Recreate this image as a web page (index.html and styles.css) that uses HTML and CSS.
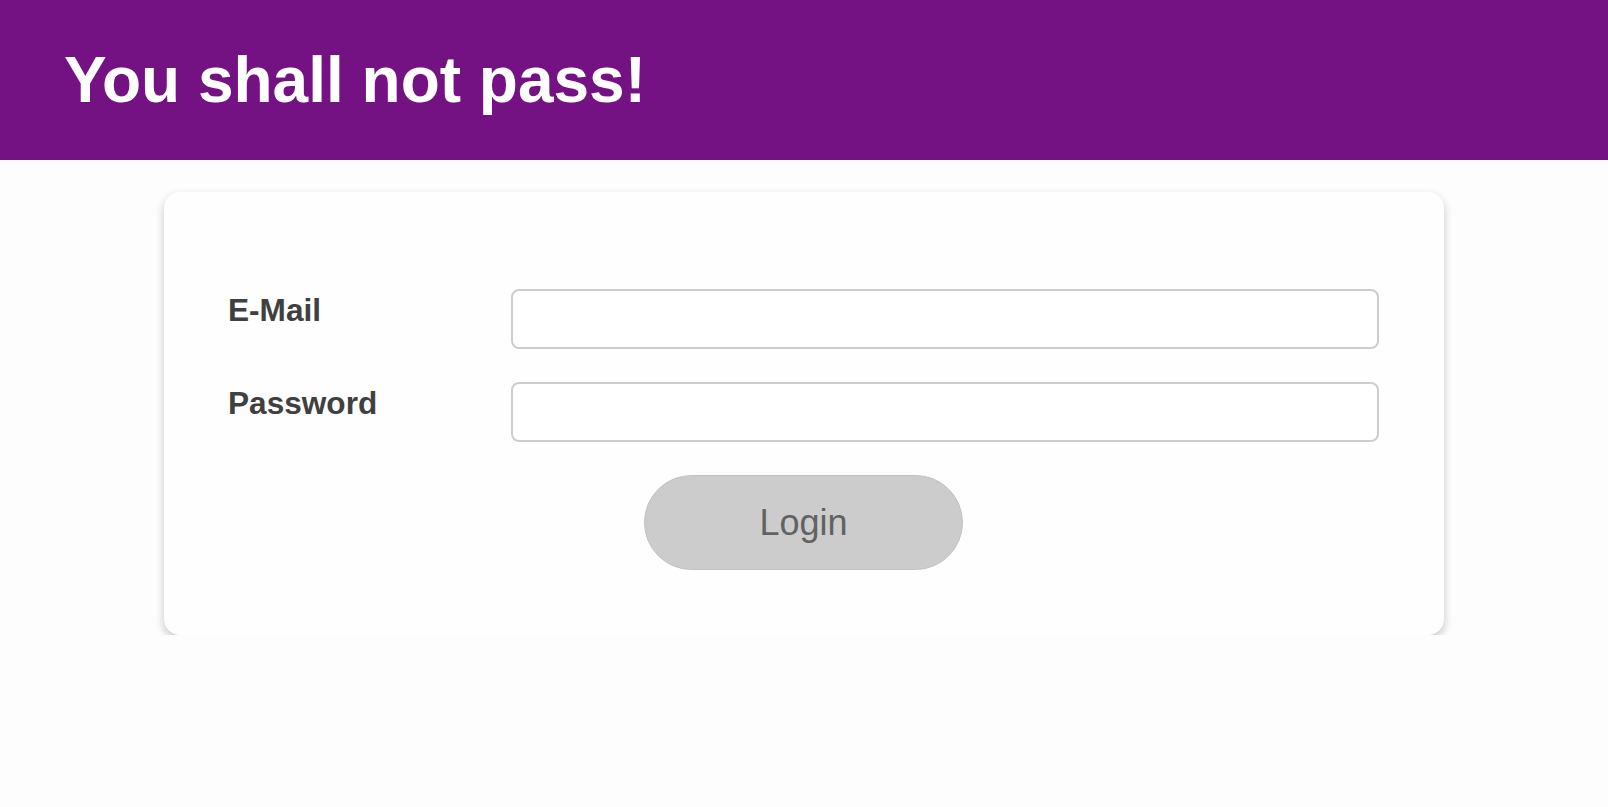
FILE: index.html
```html
<!DOCTYPE html>
<html lang="en">
<head>
  <meta charset="UTF-8">
  <meta name="viewport" content="width=device-width, initial-scale=1.0">
  <title>Login</title>
  <link rel="stylesheet" href="styles.css">
</head>
<body>
  <header>
    <h1>You shall not pass!</h1>
  </header>

  <div class="login-card">
    <form class="login-form" onsubmit="return false;">
      <label for="email">E-Mail</label>
      <input type="email" id="email">

      <label for="password">Password</label>
      <input type="password" id="password">

      <button type="submit" class="login-button">Login</button>
    </form>
  </div>
</body>
</html>
```

FILE: styles.css
```css
body {
  font-family: "Liberation Sans", Arial, sans-serif;
  margin: 0;
  padding: 0;
  background-color: #fdfdfd;
}

header {
  background-color: #751283;
  color: white;
  height: 160px;
  padding: 0 64px;
  display: flex;
  align-items: center;
}

header h1 {
  margin: 0;
  font-size: 64px;
  font-weight: bold;
}

.login-card {
  width: 1280px;
  box-sizing: border-box;
  margin: 32px auto 0;
  padding: 97px 65px 65px 64px;
  background-color: #fefefe;
  border-radius: 16px;
  box-shadow: 0 4px 10px rgba(0, 0, 0, 0.22);
}

.login-form {
  display: grid;
  grid-template-columns: 283px 1fr;
  row-gap: 33px;
}

.login-form label {
  padding-top: 3px;
  font-size: 31.6px;
  font-weight: bold;
  color: #404040;
}

.login-form input {
  height: 60px;
  box-sizing: border-box;
  border: 2px solid #cdcdcd;
  border-radius: 8px;
  padding: 0 12px;
  font-size: 24px;
  background-color: #fff;
}

.login-button {
  grid-column: 1 / -1;
  justify-self: center;
  width: 319px;
  height: 95px;
  padding-top: 2px;
  border: 1px solid #c2c2c2;
  border-radius: 48px;
  background-color: #cccccc;
  color: #626262;
  font-family: "Liberation Sans", Arial, sans-serif;
  font-size: 36px;
  cursor: pointer;
}
```
